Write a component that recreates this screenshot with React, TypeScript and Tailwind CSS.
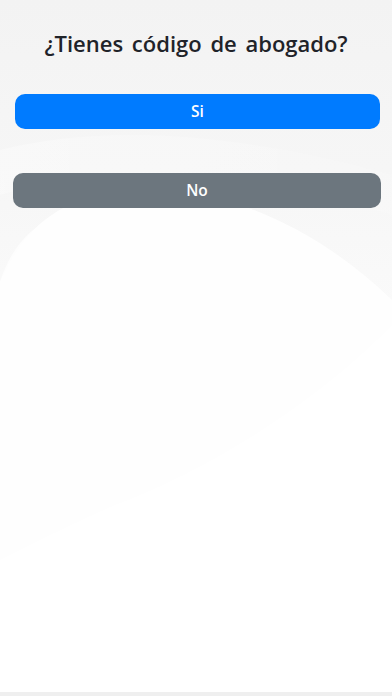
import React from 'react';

const Backdrop: React.FC = () => (
  <svg
    className="absolute inset-0 h-full w-full"
    viewBox="0 0 392 696"
    preserveAspectRatio="none"
    aria-hidden="true"
  >
    <defs>
      <linearGradient id="bgTop" x1="0" y1="0" x2="0" y2="1">
        <stop offset="0" stopColor="#f3f3f3" />
        <stop offset="0.5" stopColor="#f6f6f6" />
        <stop offset="1" stopColor="#fbfbfb" />
      </linearGradient>
      <linearGradient id="band" x1="0" y1="0" x2="1" y2="0">
        <stop offset="0" stopColor="#ffffff" stopOpacity="0.9" />
        <stop offset="1" stopColor="#ffffff" stopOpacity="0.3" />
      </linearGradient>
    </defs>
    <rect width="392" height="696" fill="#fdfdfd" />
    <path d="M0 0 H392 V340 C320 260 200 220 60 215 C30 225 10 250 0 282 Z" fill="url(#bgTop)" />
    <path d="M0 282 C25 225 60 200 120 190 C220 180 320 230 392 300 V696 H0 Z" fill="#fefefe" />
    <path d="M115 505 C210 470 320 400 392 325 V696 H0 V560 C40 540 80 520 115 505 Z" fill="#ffffff" />
    <path d="M0 150 C100 125 230 130 392 175 V215 C230 165 100 165 0 195 Z" fill="url(#band)" opacity="0.35" />
    <rect y="692" width="392" height="4" fill="#efefef" />
  </svg>
);

export default function App() {
  return (
    <div
      className="relative h-[696px] w-[392px] overflow-hidden"
      style={{ fontFamily: '"Open Sans", "Noto Sans", sans-serif' }}
    >
      <Backdrop />
      <div className="relative flex flex-col items-start">
        <h1 className="mt-[28px] w-full text-center text-[22px] font-semibold leading-[30px] text-[#1f2329] [word-spacing:3px]">
          ¿Tienes código de abogado?
        </h1>
        <button className="ml-[15px] mt-[36px] h-[35px] w-[365px] rounded-[10px] bg-[#007bff] text-[15.5px] font-semibold text-white">
          Si
        </button>
        <button className="ml-[13px] mt-[44px] h-[35px] w-[368px] rounded-[10px] bg-[#6c767e] text-[15.5px] font-semibold text-white">
          No
        </button>
      </div>
    </div>
  );
}
